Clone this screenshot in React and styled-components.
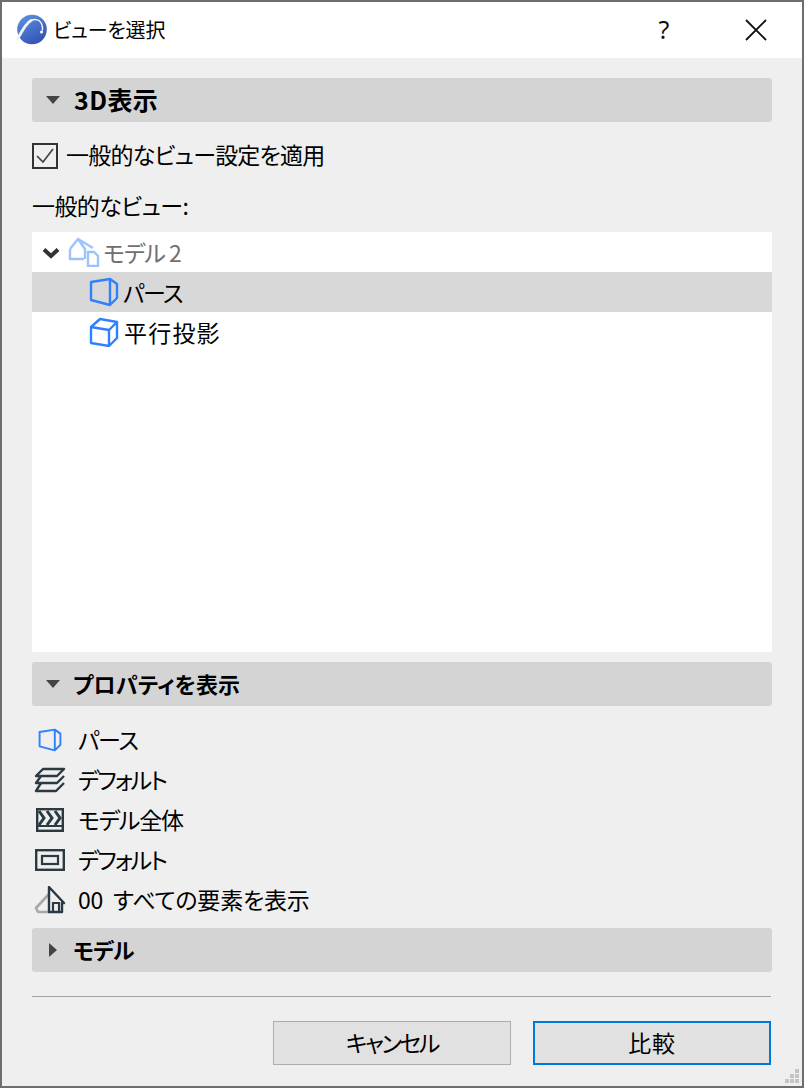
import React from "react"
import styled, { createGlobalStyle } from "styled-components"

const GlobalStyle = createGlobalStyle`
  html, body {
    margin: 0;
    padding: 0;
    background: #efefef;
  }
  body {
    font-family: "Noto Sans CJK JP", "Noto Sans", sans-serif;
    font-feature-settings: "palt";
    color: #000;
  }
`

const Window = styled.div`
  position: relative;
  box-sizing: border-box;
  width: 804px;
  height: 1088px;
  border: 2px solid #6e6e6e;
  background: #efefef;
  display: flex;
  flex-direction: column;
`

const TitleBar = styled.header`
  height: 56px;
  flex: none;
  background: #fff;
  display: flex;
  align-items: center;
  padding-left: 14px;
`

const Title = styled.div`
  margin-left: 6px;
  padding-bottom: 2px;
  font-size: 20px;
  letter-spacing: -0.2px;
  flex: 1;
`

const TitleButton = styled.div`
  width: 92px;
  height: 56px;
  display: flex;
  align-items: center;
  justify-content: center;
`

const Help = styled.span`
  font-family: "Noto Sans", sans-serif;
  font-size: 25px;
  color: #111;
  padding-bottom: 2px;
`

const Body = styled.main`
  flex: 1;
  display: flex;
  flex-direction: column;
  padding: 20px 30px 0;
`

const SectionHeader = styled.div`
  height: 44px;
  flex: none;
  border-radius: 3px;
  background: #d4d4d4;
  display: flex;
  align-items: center;
  padding-left: 13px;
  margin-top: ${p => p.$top || 0}px;
`

const SectionTitle = styled.div`
  margin-left: ${p => p.$left || 12}px;
  font-size: ${p => p.$size || 22}px;
  font-weight: 700;
  letter-spacing: ${p => p.$track || 0}px;
  padding-bottom: 2px;
`

const CheckRow = styled.label`
  display: flex;
  align-items: center;
  height: 26px;
  margin-top: 21px;
`

const CheckBox = styled.span`
  box-sizing: border-box;
  width: 26px;
  height: 26px;
  border: 2px solid #333;
  display: flex;
  align-items: center;
  justify-content: center;
`

const Text = styled.span`
  font-size: 23px;
  line-height: 40px;
  white-space: nowrap;
  color: ${p => p.$muted ? "#6f6f6f" : "#000"};
  margin-left: ${p => p.$left || 0}px;
  letter-spacing: ${p => p.$track || 0}px;
  word-spacing: ${p => p.$gap || 0}px;
`

const CheckLabel = styled(Text)`
  margin-bottom: 5px;
`

const FieldLabel = styled.div`
  font-size: 23px;
  line-height: 32px;
  letter-spacing: -0.6px;
  margin-top: 20px;
  height: 43px;
`

const Tree = styled.div`
  height: 420px;
  flex: none;
  background: #fff;
`

const TreeRow = styled.div`
  height: 40px;
  display: flex;
  align-items: center;
  padding-left: ${p => p.$indent}px;
  background: ${p => p.$selected ? "#d8d8d8" : "transparent"};
`

const ChevronSlot = styled.span`
  width: 26px;
  flex: none;
`

const Props = styled.div`
  margin-top: 14px;
  margin-bottom: 8px;
`

const PropRow = styled.div`
  height: 40px;
  display: flex;
  align-items: center;
  padding-left: 2px;
`

const PropIcon = styled.span`
  width: 32px;
  height: 32px;
  flex: none;
  display: flex;
  align-items: center;
  justify-content: center;
  margin-right: 12px;
`

const PropText = styled(Text)`
  margin-bottom: 3px;
`

const Divider = styled.hr`
  margin: 24px 0 0;
  border: 0;
  height: 1px;
  width: 739px;
  background: #a0a0a0;
`

const Footer = styled.footer`
  display: flex;
  justify-content: flex-end;
  gap: 22px;
  margin-top: 24px;
  padding-right: 1px;
`

const Button = styled.button`
  box-sizing: border-box;
  width: 238px;
  height: 44px;
  padding: 0 0 2px;
  font-family: inherit;
  font-feature-settings: inherit;
  font-size: 23px;
  letter-spacing: ${p => p.$track || 0}px;
  color: #000;
  background: #e1e1e1;
  border: ${p => p.$primary ? "2px solid #0078d7" : "1px solid #adadad"};
`

const Grip = styled.svg`
  position: absolute;
  right: 0;
  bottom: 0;
`

const Logo = () => (
  <svg width="31" height="32" viewBox="0 0 31 32">
    <defs>
      <linearGradient id="logoFill" x1="0.2" y1="0" x2="0.8" y2="1">
        <stop offset="0" stopColor="#5c8fe0" />
        <stop offset="1" stopColor="#2f4fb0" />
      </linearGradient>
    </defs>
    <circle cx="16" cy="15.5" r="14.8" fill="url(#logoFill)" />
    <path d="M1.500 25C6 17 10 9 15 6.500" fill="none" stroke="#f2f2f2" strokeWidth="3" strokeLinecap="round" />
    <path d="M15 6.500C21 3.500 27 7 26.500 16" fill="none" stroke="#f2f2f2" strokeWidth="1.500" strokeLinecap="round" />
    <circle cx="25.500" cy="18" r="1.500" fill="#fff" />
  </svg>
)

const CloseIcon = () => (
  <svg width="22" height="22" viewBox="0 0 22 22">
    <path d="M1 1L21 21M21 1L1 21" stroke="#111" strokeWidth="1.800" />
  </svg>
)

const Caret = ({ open }) => (
  <svg width="16" height="16" viewBox="0 0 16 16">
    {open
      ? <path d="M1 4H15L8 12Z" fill="#444" />
      : <path d="M4 1V15L12 8Z" fill="#444" />}
  </svg>
)

const Check = () => (
  <svg width="20" height="18" viewBox="0 0 20 18">
    <path d="M2 9L8 15L18 2" fill="none" stroke="#444" strokeWidth="1.700" />
  </svg>
)

const Chevron = () => (
  <svg width="18" height="12" viewBox="0 0 18 12">
    <path d="M2 2.500L9 9L16 2.500" fill="none" stroke="#333" strokeWidth="4" />
  </svg>
)

const ModelIcon = () => (
  <svg width="32" height="30" viewBox="0 0 32 30">
    <path d="M2 12L10 2L25 11M2 12V22H16M10 2L17 12V22" fill="none" stroke="#9cc3fb" strokeWidth="2.400" />
    <path d="M20 15H26L30 19V29H20Z" fill="#fff" stroke="#9cc3fb" strokeWidth="2.400" />
  </svg>
)

const PerspectiveIcon = ({ size = 30 }) => (
  <svg width={size} height={size} viewBox="0 0 30 30">
    <path d="M2 5L21 2L28 7V21L21 28L2 23ZM21 2V28" fill="none" stroke="#2f80ff" strokeWidth="2.400" strokeLinejoin="round" />
  </svg>
)

const AxonIcon = () => (
  <svg width="30" height="30" viewBox="0 0 30 30">
    <path d="M2 10L11 2L28 5V21L20 29L2 26ZM2 10L20 13V29M20 13L28 5" fill="none" stroke="#2f80ff" strokeWidth="2.400" strokeLinejoin="round" />
  </svg>
)

const LayersIcon = () => (
  <svg width="32" height="26" viewBox="0 0 32 26">
    <g fill="none" stroke="#2b3a42" strokeWidth="2.400" strokeLinejoin="round">
      <path d="M9 2H30L23 9H2Z" />
      <path d="M7 9L2 16H23L30 9" />
      <path d="M7 16L2 24H22L30 16" />
    </g>
  </svg>
)

const ClapIcon = () => (
  <svg width="28" height="24" viewBox="0 0 28 24">
    <rect x="1.200" y="1.200" width="25.600" height="21.600" fill="none" stroke="#2b3a42" strokeWidth="2.400" />
    <path d="M1 18H27" stroke="#2b3a42" strokeWidth="2" />
    <path d="M3 3L8 10L3 17M11 3L16 10L11 17M19 3L24 10L19 17" fill="none" stroke="#2b3a42" strokeWidth="3" />
  </svg>
)

const ZoneIcon = () => (
  <svg width="30" height="22" viewBox="0 0 30 22">
    <rect x="1.200" y="1.200" width="27.600" height="19.600" fill="none" stroke="#2b3a42" strokeWidth="2.400" />
    <rect x="7" y="7" width="16" height="8" fill="none" stroke="#2b3a42" strokeWidth="2.200" />
  </svg>
)

const FloorIcon = () => (
  <svg width="32" height="28" viewBox="0 0 32 28">
    <path d="M15 8L2 22L4 26H15" fill="none" stroke="#a8a8a8" strokeWidth="2.600" strokeLinejoin="round" />
    <path d="M15 1L30 17H28V26H15Z" fill="none" stroke="#2b3a42" strokeWidth="2.400" strokeLinejoin="round" />
    <path d="M19 26V17H25V26" fill="none" stroke="#2b3a42" strokeWidth="2.200" />
  </svg>
)

const properties = [
  { icon: <PerspectiveIcon size={24} />, label: "パース", track: -1.4 },
  { icon: <LayersIcon />, label: "デフォルト", track: -2 },
  { icon: <ClapIcon />, label: "モデル全体", track: -1.2 },
  { icon: <ZoneIcon />, label: "デフォルト", track: -2 },
  { icon: <FloorIcon />, label: "00 すべての要素を表示", track: -0.2, gap: 5 }
]

export default function App() {
  return (
    <Window>
      <GlobalStyle />
      <TitleBar>
        <Logo />
        <Title>ビューを選択</Title>
        <TitleButton><Help>?</Help></TitleButton>
        <TitleButton><CloseIcon /></TitleButton>
      </TitleBar>
      <Body>
        <SectionHeader>
          <Caret open />
          <SectionTitle $size={25} $left={13} $track={0.4}>3D表示</SectionTitle>
        </SectionHeader>
        <CheckRow>
          <CheckBox><Check /></CheckBox>
          <CheckLabel $left={8} $track={-0.8}>一般的なビュー設定を適用</CheckLabel>
        </CheckRow>
        <FieldLabel>一般的なビュー:</FieldLabel>
        <Tree>
          <TreeRow $indent={10}>
            <ChevronSlot><Chevron /></ChevronSlot>
            <ModelIcon />
            <Text $muted $left={3} $track={-1}>モデル 2</Text>
          </TreeRow>
          <TreeRow $indent={57} $selected>
            <PerspectiveIcon />
            <Text $left={4} $track={-1.6}>パース</Text>
          </TreeRow>
          <TreeRow $indent={57}>
            <AxonIcon />
            <Text $left={5} $track={1.2}>平行投影</Text>
          </TreeRow>
        </Tree>
        <SectionHeader $top={10}>
          <Caret open />
          <SectionTitle $left={12} $track={0.1}>プロパティを表示</SectionTitle>
        </SectionHeader>
        <Props>
          {properties.map((row, i) => (
            <PropRow key={i}>
              <PropIcon>{row.icon}</PropIcon>
              <PropText $track={row.track} $gap={row.gap}>{row.label}</PropText>
            </PropRow>
          ))}
        </Props>
        <SectionHeader>
          <Caret />
          <SectionTitle $left={12} $track={-0.8}>モデル</SectionTitle>
        </SectionHeader>
        <Divider />
        <Footer>
          <Button $track={-2.4}>キャンセル</Button>
          <Button $primary $track={0.8}>比較</Button>
        </Footer>
      </Body>
      <Grip width="18" height="18" viewBox="0 0 18 18">
        <path d="M11 1h4v4h-4zM6 6h4v4H6zM11 6h4v4h-4zM1 11h4v4H1zM6 11h4v4H6zM11 11h4v4h-4z" fill="#c4c4c4" />
      </Grip>
    </Window>
  )
}
